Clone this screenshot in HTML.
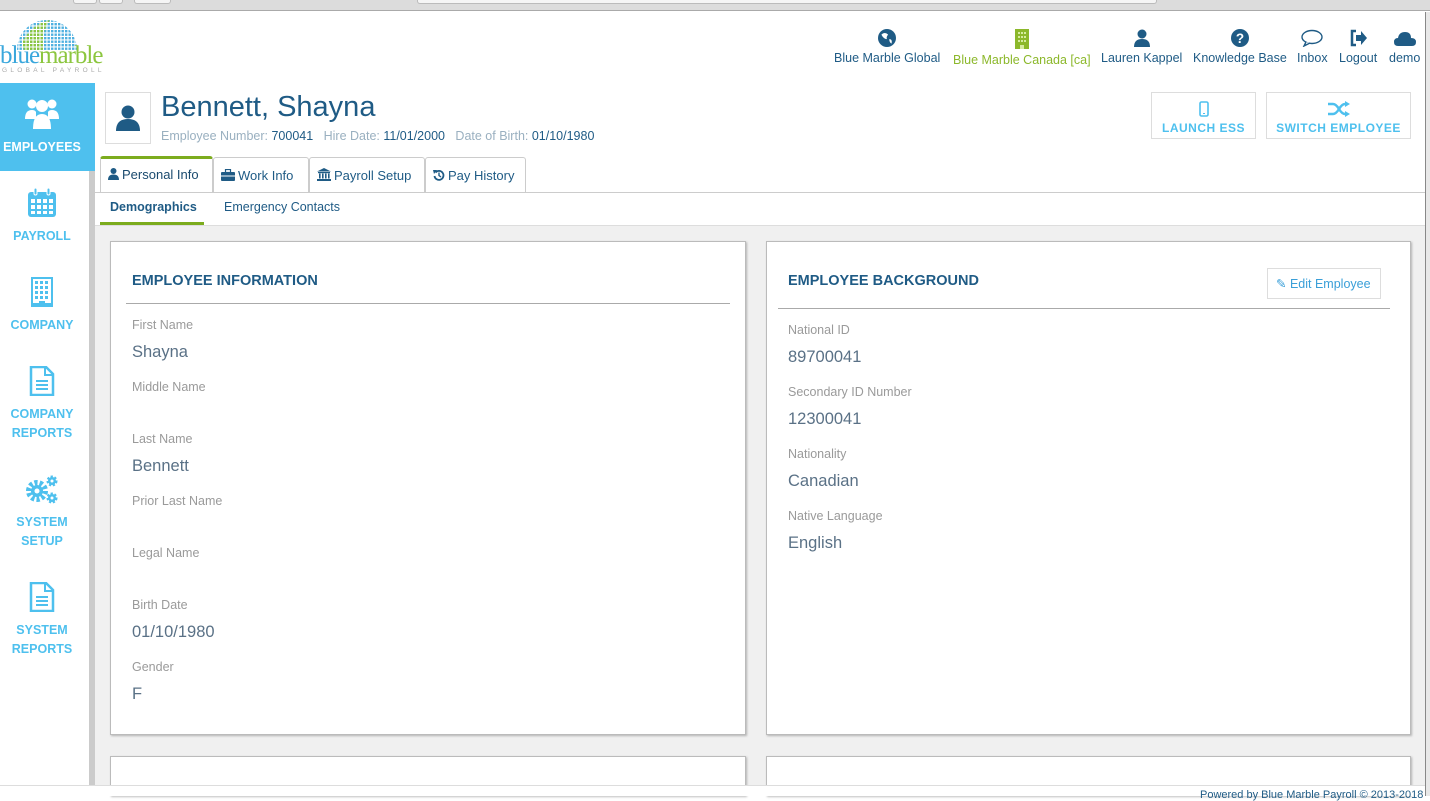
<!DOCTYPE html>
<html><head><meta charset="utf-8"><style>
*{box-sizing:border-box;margin:0;padding:0}
body{width:1430px;height:796px;overflow:hidden;background:#fff;font-family:"Liberation Sans",sans-serif;position:relative;color:#1f5b85}
.a{position:absolute}
.nav{position:absolute;top:29px;text-align:center;font-size:12.5px;color:#1f5b85;white-space:nowrap}
.nav svg{display:block;margin:0 auto 4px}
.side{position:absolute;left:0;width:84px;text-align:center;color:#4ec0ee;font-weight:bold;font-size:12.5px;line-height:19px}
.side svg{display:block;margin:0 auto 9px}
.card{position:absolute;background:#fff;border:1px solid #bbb;box-shadow:1px 1px 2px rgba(0,0,0,.25)}
.lab{position:absolute;font-size:12.5px;color:#9a9a9a}
.val{position:absolute;font-size:16.5px;color:#5a7186}
.h{position:absolute;font-size:14.5px;font-weight:bold;color:#1f5b85}
.tab{position:absolute;top:157px;height:35px;border:1px solid #ccc;border-bottom:none;background:#fff;font-size:13px;padding:10px 0 0 7px;color:#1f5b85;border-radius:3px 3px 0 0;white-space:nowrap}
.tab svg{vertical-align:-1px;margin-right:3px}
.btn{position:absolute;top:92px;height:47px;border:1px solid #ddd;text-align:center;color:#4ec0ee;font-weight:bold;font-size:12px;letter-spacing:.5px;padding-top:8px}
</style></head><body>
<!-- chrome -->
<div class="a" style="left:0;top:0;width:1430px;height:11px;background:#dcdcdc;border-bottom:1px solid #aaa"></div>
<div class="a" style="left:73px;top:0;width:24px;height:4px;background:#f5f5f5;border:1px solid #bbb;border-top:none;border-radius:0 0 3px 3px"></div>
<div class="a" style="left:99px;top:0;width:24px;height:4px;background:#f5f5f5;border:1px solid #bbb;border-top:none;border-radius:0 0 3px 3px"></div>
<div class="a" style="left:134px;top:0;width:37px;height:4px;background:#f5f5f5;border:1px solid #bbb;border-top:none;border-radius:0 0 3px 3px"></div>
<div class="a" style="left:417px;top:0;width:740px;height:4px;background:#f5f5f5;border:1px solid #bbb;border-top:none;border-radius:0 0 3px 3px"></div>
<div class="a" style="left:1425px;top:12px;width:5px;height:784px;background:#e8e8e8;border-left:1px solid #888"></div>
<!-- logo -->
<svg class="a" style="left:16px;top:16px" width="62" height="34" viewBox="0 0 62 34">
<defs><pattern id="p" width="3.5" height="3.5" patternUnits="userSpaceOnUse"><rect width="2.4" height="2.4" fill="#4fb0e0"/></pattern><pattern id="q" width="3.5" height="3.5" patternUnits="userSpaceOnUse"><rect width="2.4" height="2.4" fill="#8cc63f"/></pattern></defs>
<path d="M1 34 A30 30 0 0 1 61 34Z" fill="url(#p)"/><path d="M6 26 Q16 8 34 4 Q24 18 28 34 L8 34Z" fill="url(#q)"/></svg>
<div class="a" style="left:0px;top:43px;font-family:'Liberation Serif',serif;font-size:25px;letter-spacing:-1px;line-height:25px"><span style="color:#3aa7dc">blue</span><span style="color:#8cc63f">marble</span></div>
<div class="a" style="left:2px;top:67px;font-size:6.5px;letter-spacing:3.3px;color:#aaa">GLOBAL PAYROLL</div>
<!-- top nav -->
<div class="nav" style="left:834px"><svg width="18" height="18" viewBox="0 0 16 16"><circle cx="8" cy="8" r="8" fill="#1f5b85"/><path d="M3 5 Q6 2 9 5 Q7 7 8 9 Q5 9 3 5M10 9 Q13 9 12 13 Q10 12 10 9" fill="#fff"/></svg>Blue Marble Global</div>
<div class="nav" style="left:953px;color:#8cb82b"><svg width="14" height="20" viewBox="0 0 14 20"><rect width="14" height="20" fill="#8cb82b"/><g fill="#d6eca0"><rect x="3" y="3" width="2" height="2"/><rect x="6" y="3" width="2" height="2"/><rect x="9" y="3" width="2" height="2"/><rect x="3" y="7" width="2" height="2"/><rect x="6" y="7" width="2" height="2"/><rect x="9" y="7" width="2" height="2"/><rect x="3" y="11" width="2" height="2"/><rect x="6" y="11" width="2" height="2"/><rect x="9" y="11" width="2" height="2"/><rect x="5" y="16" width="4" height="4"/></g></svg>Blue Marble Canada [ca]</div>
<div class="nav" style="left:1101px"><svg width="16" height="18" viewBox="0 0 16 18"><circle cx="8" cy="5" r="4.5" fill="#1f5b85"/><path d="M0 18 Q0 10 8 10 Q16 10 16 18Z" fill="#1f5b85"/></svg>Lauren Kappel</div>
<div class="nav" style="left:1193px"><svg width="18" height="18" viewBox="0 0 16 16"><circle cx="8" cy="8" r="8" fill="#1f5b85"/><text x="8" y="12.5" text-anchor="middle" font-size="12" font-weight="bold" fill="#fff" font-family="Liberation Sans">?</text></svg>Knowledge Base</div>
<div class="nav" style="left:1297px"><svg width="22" height="18" viewBox="0 0 22 18"><ellipse cx="11" cy="8" rx="10" ry="6.5" fill="none" stroke="#1f5b85" stroke-width="1.4"/><path d="M5 13 L3 17 L9 14" fill="#fff" stroke="#1f5b85" stroke-width="1.4"/></svg>Inbox</div>
<div class="nav" style="left:1339px"><svg width="18" height="18" viewBox="0 0 18 18"><path d="M7 2H3v14h4" fill="none" stroke="#1f5b85" stroke-width="2.5"/><path d="M7 6h5V2l6 7-6 7v-4H7z" fill="#1f5b85"/></svg>Logout</div>
<div class="nav" style="left:1389px"><svg width="22" height="18" viewBox="0 0 22 18"><path d="M4 17 Q0 17 0 13 Q0 9 4 9 Q5 3 11 3 Q17 3 17 9 Q22 9 22 13 Q22 17 18 17Z" fill="#1f5b85"/></svg>demo</div>
<!-- sidebar -->
<div class="a" style="left:0;top:83px;width:95px;height:713px;background:#fff"></div>
<div class="a" style="left:89px;top:171px;width:6px;height:625px;background:#cbcbcb"></div>
<div class="a" style="left:0;top:83px;width:95px;height:88px;background:#4ec0ee"></div>
<div class="side" style="top:97px;width:84px;color:#fff"><svg width="34" height="32" viewBox="0 0 34 32"><g fill="#fff"><circle cx="7" cy="7" r="4.5"/><circle cx="27" cy="7" r="4.5"/><circle cx="17" cy="9" r="6"/><path d="M0 22 Q0 13 7 13 Q10 13 11 15 L11 22Z"/><path d="M34 22 Q34 13 27 13 Q24 13 23 15 L23 22Z"/><path d="M8 32 Q8 17 17 17 Q26 17 26 32Z"/></g></svg>EMPLOYEES</div>
<div class="side" style="top:188px"><svg width="30" height="30" viewBox="0 0 30 30"><rect x="1" y="4" width="28" height="25" rx="3" fill="#4ec0ee"/><g fill="#fff"><rect x="4" y="11" width="4" height="4"/><rect x="10" y="11" width="4" height="4"/><rect x="16" y="11" width="4" height="4"/><rect x="22" y="11" width="4" height="4"/><rect x="4" y="17" width="4" height="4"/><rect x="10" y="17" width="4" height="4"/><rect x="16" y="17" width="4" height="4"/><rect x="22" y="17" width="4" height="4"/><rect x="4" y="23" width="4" height="3"/><rect x="10" y="23" width="4" height="3"/><rect x="16" y="23" width="4" height="3"/><rect x="22" y="23" width="4" height="3"/></g><rect x="7" y="0" width="3" height="7" rx="1.5" fill="#4ec0ee" stroke="#fff"/><rect x="20" y="0" width="3" height="7" rx="1.5" fill="#4ec0ee" stroke="#fff"/></svg>PAYROLL</div>
<div class="side" style="top:277px"><svg width="26" height="30" viewBox="0 0 26 30"><rect x="2" y="0" width="22" height="30" fill="#4ec0ee"/><rect x="4" y="2" width="18" height="24" fill="#fff"/><g fill="#4ec0ee"><rect x="6" y="4" width="3" height="3"/><rect x="11" y="4" width="3" height="3"/><rect x="16" y="4" width="3" height="3"/><rect x="6" y="9" width="3" height="3"/><rect x="11" y="9" width="3" height="3"/><rect x="16" y="9" width="3" height="3"/><rect x="6" y="14" width="3" height="3"/><rect x="11" y="14" width="3" height="3"/><rect x="16" y="14" width="3" height="3"/><rect x="6" y="19" width="3" height="3"/><rect x="11" y="19" width="3" height="3"/><rect x="16" y="19" width="3" height="3"/><rect x="10" y="24" width="6" height="6"/></g></svg>COMPANY</div>
<div class="side" style="top:366px"><svg width="26" height="30" viewBox="0 0 26 30"><path d="M2 1H17L24 8V29H2Z" fill="none" stroke="#4ec0ee" stroke-width="2.5"/><path d="M16 1V9H24" fill="none" stroke="#4ec0ee" stroke-width="2"/><g stroke="#4ec0ee" stroke-width="2"><path d="M7 15H19M7 19H19M7 23H19"/></g></svg>COMPANY<br>REPORTS</div>
<div class="side" style="top:474px"><svg width="34" height="30" viewBox="0 0 34 30"><circle cx="12" cy="17" r="8" fill="none" stroke="#4ec0ee" stroke-width="6" stroke-dasharray="3 2"/><circle cx="12" cy="17" r="6" fill="#4ec0ee"/><circle cx="12" cy="17" r="2.5" fill="#fff"/><circle cx="27" cy="7" r="4" fill="#4ec0ee" stroke="#4ec0ee" stroke-width="3" stroke-dasharray="2 1.5"/><circle cx="27" cy="7" r="1.5" fill="#fff"/><circle cx="27" cy="24" r="4" fill="#4ec0ee" stroke="#4ec0ee" stroke-width="3" stroke-dasharray="2 1.5"/><circle cx="27" cy="24" r="1.5" fill="#fff"/></svg>SYSTEM<br>SETUP</div>
<div class="side" style="top:582px"><svg width="26" height="30" viewBox="0 0 26 30"><path d="M2 1H17L24 8V29H2Z" fill="none" stroke="#4ec0ee" stroke-width="2.5"/><path d="M16 1V9H24" fill="none" stroke="#4ec0ee" stroke-width="2"/><g stroke="#4ec0ee" stroke-width="2"><path d="M7 15H19M7 19H19M7 23H19"/></g></svg>SYSTEM<br>REPORTS</div>
<!-- header -->
<div class="a" style="left:105px;top:92px;width:46px;height:52px;border:1px solid #ddd"></div>
<svg class="a" style="left:116px;top:105px" width="24" height="26" viewBox="0 0 24 26"><circle cx="12" cy="7" r="6.5" fill="#1f5b85"/><path d="M0 26 Q0 14 12 14 Q24 14 24 26Z" fill="#1f5b85"/></svg>
<div class="a" style="left:161px;top:91px;font-size:29px;color:#1f5b85">Bennett, Shayna</div>
<div class="a" style="left:161px;top:129px;font-size:12.5px;color:#9ab0c0;white-space:nowrap">Employee Number: <span style="color:#1f5b85">700041</span>&nbsp;&nbsp; Hire Date: <span style="color:#1f5b85">11/01/2000</span>&nbsp;&nbsp; Date of Birth: <span style="color:#1f5b85">01/10/1980</span></div>
<div class="btn" style="left:1151px;width:105px"><svg width="10" height="16" viewBox="0 0 10 16" style="display:block;margin:0 auto 4px"><rect x="1" y="1" width="8" height="14" rx="1.5" fill="none" stroke="#4ec0ee" stroke-width="1.6"/><rect x="4" y="12" width="2" height="1" fill="#4ec0ee"/></svg>LAUNCH ESS</div>
<div class="btn" style="left:1266px;width:145px"><svg width="22" height="16" viewBox="0 0 22 16" style="display:block;margin:0 auto 4px"><path d="M0 3H5Q8 3 11 8Q14 13 17 13H19M0 13H5Q8 13 11 8Q14 3 17 3H19" fill="none" stroke="#4ec0ee" stroke-width="2.4"/><path d="M17 0L22 3L17 6ZM17 10L22 13L17 16Z" fill="#4ec0ee"/></svg>SWITCH EMPLOYEE</div>
<!-- tabs -->
<div class="a" style="left:95px;top:192px;width:1330px;height:1px;background:#ccc"></div>
<div class="tab" style="left:100px;width:113px;border-top:3px solid #7cac1e;padding-top:8px;height:36px;top:156px;color:#1a4a6e"><svg width="11" height="12" viewBox="0 0 11 12"><circle cx="5.5" cy="3" r="3" fill="#1f5b85"/><path d="M0 12Q0 6.5 5.5 6.5Q11 6.5 11 12Z" fill="#1f5b85"/></svg>Personal Info</div>
<div class="tab" style="left:213px;width:96px"><svg width="14" height="12" viewBox="0 0 14 12"><rect x="0" y="3" width="14" height="9" rx="1" fill="#1f5b85"/><rect x="4.5" y="0.5" width="5" height="3" fill="none" stroke="#1f5b85" stroke-width="1.2"/><rect x="0" y="6.5" width="14" height="1" fill="#fff"/></svg>Work Info</div>
<div class="tab" style="left:309px;width:116px"><svg width="14" height="13" viewBox="0 0 14 13"><path d="M7 0L14 3.5H0Z" fill="#1f5b85"/><rect x="1" y="4" width="12" height="1.2" fill="#1f5b85"/><g fill="#1f5b85"><rect x="2" y="5.5" width="1.6" height="5"/><rect x="5" y="5.5" width="1.6" height="5"/><rect x="8" y="5.5" width="1.6" height="5"/><rect x="11" y="5.5" width="1.6" height="5"/></g><rect x="0" y="11" width="14" height="2" fill="#1f5b85"/></svg>Payroll Setup</div>
<div class="tab" style="left:425px;width:101px"><svg width="12" height="12" viewBox="0 0 12 12"><path d="M2.5 3.5A4.5 4.5 0 1 1 1.5 7" fill="none" stroke="#1f5b85" stroke-width="1.8"/><path d="M0 1L4 1 1 5Z" fill="#1f5b85"/><path d="M6 3.5V6.5L8 8" fill="none" stroke="#1f5b85" stroke-width="1.4"/></svg>Pay History</div>
<div class="a" style="left:110px;top:200px;font-size:12.5px;font-weight:bold;color:#1f5b85">Demographics</div>
<div class="a" style="left:100px;top:222px;width:104px;height:3px;background:#7cac1e"></div>
<div class="a" style="left:224px;top:200px;font-size:12.5px;color:#1f5b85">Emergency Contacts</div>
<!-- content -->
<div class="a" style="left:95px;top:225px;width:1330px;height:560px;background:#f0f0f0;border-top:1px solid #ddd"></div>
<div class="card" style="left:110px;top:241px;width:636px;height:494px">
<div class="h" style="left:21px;top:31px">EMPLOYEE INFORMATION</div>
<div class="a" style="left:15px;top:61px;width:604px;height:1px;background:#aaa"></div>
<div class="lab" style="left:21px;top:76px">First Name</div><div class="val" style="left:21px;top:101px">Shayna</div>
<div class="lab" style="left:21px;top:138px">Middle Name</div>
<div class="lab" style="left:21px;top:190px">Last Name</div><div class="val" style="left:21px;top:215px">Bennett</div>
<div class="lab" style="left:21px;top:252px">Prior Last Name</div>
<div class="lab" style="left:21px;top:304px">Legal Name</div>
<div class="lab" style="left:21px;top:356px">Birth Date</div><div class="val" style="left:21px;top:381px">01/10/1980</div>
<div class="lab" style="left:21px;top:418px">Gender</div><div class="val" style="left:21px;top:443px">F</div>
</div>
<div class="card" style="left:766px;top:241px;width:645px;height:494px">
<div class="h" style="left:21px;top:31px">EMPLOYEE BACKGROUND</div>
<div class="a" style="left:500px;top:26px;width:114px;height:31px;border:1px solid #ddd;font-size:12.5px;color:#3a9fd8;padding:7px 0 0 8px;white-space:nowrap">&#9998; Edit Employee</div>
<div class="a" style="left:11px;top:66px;width:612px;height:1px;background:#aaa"></div>
<div class="lab" style="left:21px;top:81px">National ID</div><div class="val" style="left:21px;top:106px">89700041</div>
<div class="lab" style="left:21px;top:143px">Secondary ID Number</div><div class="val" style="left:21px;top:168px">12300041</div>
<div class="lab" style="left:21px;top:205px">Nationality</div><div class="val" style="left:21px;top:230px">Canadian</div>
<div class="lab" style="left:21px;top:267px">Native Language</div><div class="val" style="left:21px;top:292px">English</div>
</div>
<div class="card" style="left:110px;top:756px;width:636px;height:40px"></div>
<div class="card" style="left:766px;top:756px;width:645px;height:40px"></div>
<div class="a" style="left:0;top:785px;width:1425px;height:11px;background:#fff;border-top:1px solid #ddd"></div>
<div class="a" style="left:1200px;top:789px;font-size:11px;color:#1f5b85;white-space:nowrap">Powered by Blue Marble Payroll © 2013-2018</div>
</body></html>
